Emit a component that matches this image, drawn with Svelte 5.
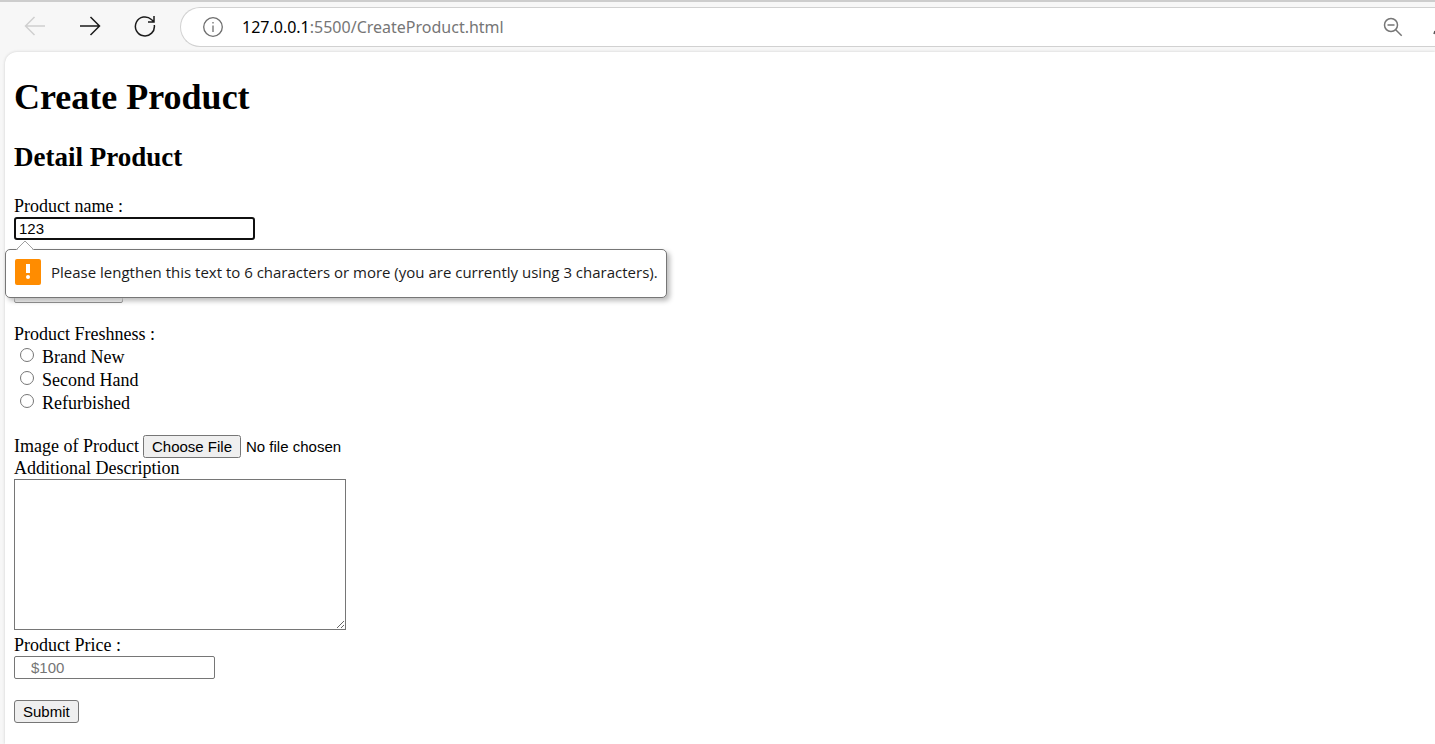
<script>
  let name = $state('123');
  let freshness = $state('');
  const choices = ['Brand New', 'Second Hand', 'Refurbished'];
</script>

<div class="browser">
  <header class="toolbar">
    <nav class="nav">
      <button class="tool back" aria-label="Back" disabled>
        <svg width="22" height="22" viewBox="0 0 22 22"><path d="M21 11H1.5M10.5 2 1.5 11l9 9" /></svg>
      </button>
      <button class="tool" aria-label="Forward">
        <svg width="22" height="22" viewBox="0 0 22 22"><path d="M1 11h19.500M11.500 2l9 9-9 9" /></svg>
      </button>
      <button class="tool" aria-label="Reload">
        <svg width="22" height="22" viewBox="0 0 22 22"><path d="M20.300 10a9.500 9.500 0 1 1-2.900-5.500L20 6.800M20 1v6h-6" /></svg>
      </button>
    </nav>
    <div class="address">
      <svg class="info" width="22" height="22" viewBox="0 0 22 22">
        <circle cx="11" cy="11" r="9.300" /><path d="M11 9.500V16M11 6v1.600" />
      </svg>
      <span class="url">127.0.0.1<span class="path">:5500/CreateProduct.html</span></span>
      <button class="tool zoom" aria-label="Zoom out">
        <svg width="20" height="20" viewBox="0 0 20 20"><circle cx="8" cy="8" r="6.500" /><path d="M4.500 8h7M12.700 12.700l6 6" /></svg>
      </button>
      <svg class="edge" width="2" height="20" viewBox="0 0 2 20"><path d="M2 14 1 17" /></svg>
    </div>
  </header>

  <main class="page">
    <h1>Create Product</h1>
    <h2>Detail Product</h2>
    <form onsubmit={(e) => e.preventDefault()}>
      <div class="field name-field">
        <label for="name">Product name :</label>
        <input id="name" class="name" type="text" minlength="6" bind:value={name} />
        <div class="bubble" role="alert">
          <svg class="tip" width="20" height="11" viewBox="0 0 20 11"><path class="fill" d="M1 11 10 1l9 10z" /><path class="line" d="M1 10 10 1l9 9" /></svg>
          <svg class="warn" width="26" height="26" viewBox="0 0 26 26">
            <rect width="26" height="26" rx="2" fill="#ff8c00" /><path d="M11 5h4v9h-4z" fill="#fff" /><circle cx="13" cy="18" r="2" fill="#fff" />
          </svg>
          <span>Please lengthen this text to 6 characters or more (you are currently using 3 characters).</span>
        </div>
      </div>
      <div class="field category">
        <select aria-label="Category"><option></option></select>
      </div>
      <fieldset class="field">
        <legend>Product Freshness :</legend>
        {#each choices as choice}
          <label class="choice"><input type="radio" name="freshness" value={choice} bind:group={freshness} />{choice}</label>
        {/each}
      </fieldset>
      <div class="file-row">
        <label for="image">Image of Product</label>
        <input id="image" type="file" />
      </div>
      <div class="field description">
        <label for="description">Additional Description</label>
        <textarea id="description"></textarea>
      </div>
      <div class="field price-field">
        <label for="price">Product Price :</label>
        <input id="price" class="price" type="text" placeholder="$100" />
      </div>
      <button class="submit" type="submit">Submit</button>
    </form>
  </main>
</div>

<style>
  :global(body) { margin: 0; background: #f7f7f7; }
  .browser { display: flex; flex-direction: column; min-height: 100vh; box-sizing: border-box; border-top: 2px solid #cdcdcd; overflow: hidden; }
  .toolbar { display: flex; align-items: center; height: 50px; }
  .nav { display: flex; gap: 33px; padding: 0 24px 2px; }
  .tool { display: flex; padding: 0; border: 0; background: none; color: #1b1b1b; }
  .back { color: #cfcfcf; }
  svg { flex: none; fill: none; stroke: currentColor; stroke-width: 1.5; }
  .address { display: flex; flex: 1; align-items: center; box-sizing: border-box; height: 40px; padding-left: 21px; border: 1px solid #d1d1d1; border-right: 0; border-radius: 20px 0 0 20px; background: #fff; }
  .info { color: #6e6e6e; stroke-width: 1.3; }
  .url { margin-left: 18px; font: 16px/24px "Noto Sans", sans-serif; color: #000; }
  .path { color: #767676; }
  .zoom { margin-left: auto; color: #767676; }
  .edge { margin-left: 30px; color: #555; }
  .page { flex: 1; margin-left: 5px; padding: 24px 9px 20px; border-radius: 12px 0 0 0; background: #fff; box-shadow: 0 0 3px #ccc; color: #000; font: 18px/21px "Liberation Serif", serif; }
  h1 { margin: 0; font-size: 36px; line-height: 42px; }
  h2 { margin: 24px 0; font-size: 27px; line-height: 30px; }
  form { display: flex; flex-direction: column; align-items: flex-start; }
  .field { display: flex; flex-direction: column; align-items: flex-start; margin: 0 0 20px; padding: 0; border: 0; }
  input, select, textarea, button { box-sizing: border-box; margin: 0; font: 15px "Liberation Sans", sans-serif; }
  .name, .price, select { height: 23px; border: 1px solid #767676; border-radius: 2px; background: #fff; }
  .name-field { position: relative; }
  .name { width: 241px; padding: 0 3px; border: 2px solid #101010; border-radius: 3px; outline: 0; }
  .category { padding-top: 20px; margin-bottom: 21px; }
  select { width: 109px; background: #efefef; }
  .bubble { position: absolute; top: 53px; left: -9px; z-index: 1; display: flex; align-items: center; gap: 10px; box-sizing: border-box; height: 49px; padding: 0 8px 3px 9px; border: 1px solid #767676; border-radius: 5px; background: #fff; box-shadow: 3px 3px 5px #bbb; white-space: nowrap; font: 15px/20px "Open Sans", sans-serif; color: #1b1b1b; }
  .tip { position: absolute; top: -10px; left: 9px; }
  .tip .fill { fill: #fff; stroke: none; }
  .tip .line { stroke: #a0a0a0; stroke-width: 1; }
  .warn { stroke: none; }
  legend { padding: 0 0 1px; }
  .choice { display: flex; align-items: center; gap: 8px; height: 23px; }
  .choice input { width: 14px; height: 14px; margin: 0 0 5px 6px; }
  .file-row { display: flex; align-items: center; gap: 4px; height: 23px; }
  input::file-selector-button { height: 23px; padding: 0 7px; margin-right: 5px; }
  .description { margin-bottom: 5px; }
  textarea { width: 332px; height: 151px; border: 1px solid #767676; }
  .price-field { margin-bottom: 21px; }
  .price { width: 201px; padding: 0 16px; }
  .submit { height: 23px; padding: 0 8px; border: 1px solid #767676; border-radius: 3px; background: #efefef; color: #000; }
</style>
